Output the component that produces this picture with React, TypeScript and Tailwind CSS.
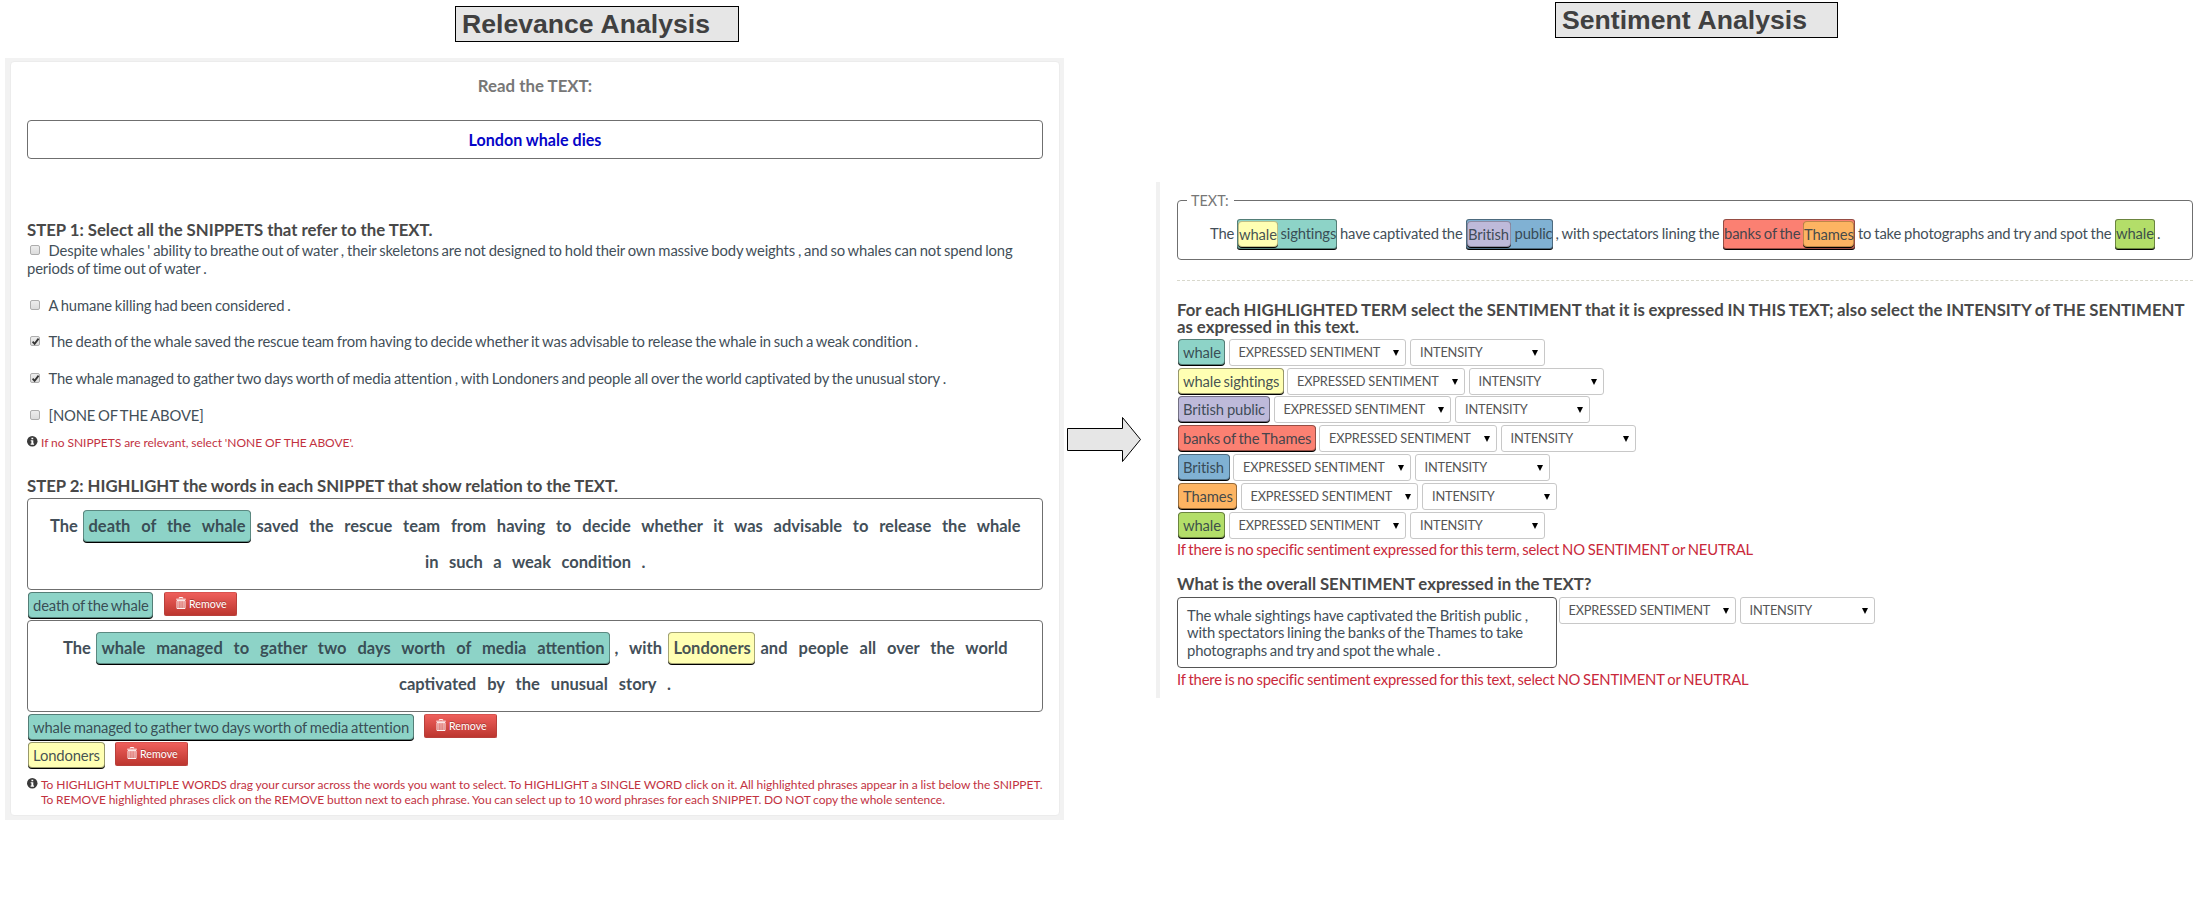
import type { ReactNode } from "react";

const body = "text-[14.8px] tracking-[-0.15px] [word-spacing:-0.9px] whitespace-nowrap [text-align-last:justify]";
const strong = "text-[16.5px] font-bold whitespace-nowrap [text-align-last:justify]";
const heading = "text-[16.75px] font-bold text-[#484848] [word-spacing:-0.6px] whitespace-nowrap [text-align-last:justify]";
const small = "text-[12px] tracking-[-0.02px] [word-spacing:-0.4px] text-[#c2323f] whitespace-nowrap [text-align-last:justify]";

const teal = "bg-[#8dd3c7]";
const yellow = "bg-[#ffffb3]";
const purple = "bg-[#bebada]";
const red = "bg-[#fb8072]";
const blue = "bg-[#80b1d3]";
const orange = "bg-[#fdb462]";
const green = "bg-[#b3de69]";

function Title({ className, width, children }: { className: string; width: string; children: ReactNode }) {
  return (
    <h1
      className={`h-[36px] border border-black bg-[#e6e6e6] pl-[6px] font-['Liberation_Sans',Arial,sans-serif] text-[26.6px] leading-[35px] font-bold text-[#404040] ${className}`}
    >
      <span className={`block whitespace-nowrap [text-align-last:justify] ${width}`}>{children}</span>
    </h1>
  );
}

function Check({ checked = false }: { checked?: boolean }) {
  return (
    <span className="mt-[4px] mr-[8.5px] ml-[3px] flex size-[10px] shrink-0 items-center justify-center rounded-[2px] border border-[#adadad] bg-linear-to-b from-[#ededed] to-[#dcdcdc]">
      {checked && (
        <svg viewBox="0 0 10 10" className="size-[9px] shrink-0">
          <path d="M1.8 5.2 L4 7.6 L8.4 1.8" fill="none" stroke="#333" strokeWidth="2" />
        </svg>
      )}
    </span>
  );
}

function Snippet({ checked, className, width, children }: { checked?: boolean; className: string; width: string; children: ReactNode }) {
  return (
    <label className={`flex h-[18px] leading-[18px] ${className}`}>
      <Check checked={checked} />
      <span className={`block ${body} ${width}`}>{children}</span>
    </label>
  );
}

function InfoIcon() {
  return (
    <svg viewBox="0 0 14 14" className="mt-[1px] mr-[3.5px] size-[10.5px] shrink-0">
      <circle cx="7" cy="7" r="7" fill="#3a3a3a" />
      <path d="M5.9 2.2h2.4v2H5.9zM4.9 5.5h3.5v4.4h1v1.6H4.8V9.9h1.1V7.1h-1z" fill="#fff" />
    </svg>
  );
}

function Remove({ className }: { className: string }) {
  return (
    <button
      className={`flex h-[24px] w-[73px] shrink-0 items-center rounded-[2px] border border-[#b8403b] border-t-[#d9534f] bg-linear-to-b from-[#ee5f5b] to-[#bd362f] pl-[11px] text-[10.7px] text-white text-shadow-[0_-1px_0_rgba(0,0,0,0.25)] ${className}`}
    >
      <svg viewBox="0 0 10 12" className="-mt-[3px] mr-[3px] h-[12px] w-[10px]">
        <path
          d="M3.3 1.4V0.5h3.4v0.9M0.2 2.2h9.6M1 3.6h8v7.9H1z"
          fill="none"
          stroke="#fff"
          strokeOpacity="0.95"
          strokeWidth="1"
        />
        <path d="M2.9 4v7M5 4v7M7.1 4v7" stroke="#fff" strokeOpacity="0.8" strokeWidth="1.1" />
      </svg>
      <span className="mt-px">Remove</span>
    </button>
  );
}

function Tag({ color, width, children }: { color: string; width: string; children: ReactNode }) {
  return (
    <span
      className={`block h-[26px] shrink-0 rounded-[4px] border border-black/40 px-[4px] leading-[25px] text-[#2f3d47]/90 shadow-[0_1px_0_#000] ${body} ${color} ${width}`}
    >
      {children}
    </span>
  );
}

function WordMark({ color, width, children }: { color: string; width: string; children: ReactNode }) {
  return (
    <span
      className={`block h-[32px] shrink-0 rounded-[4px] border border-black/35 px-[4.5px] leading-[30px] text-[#2f3d47]/90 shadow-[0_1px_0_#000] ${strong} ${color} ${width}`}
    >
      {children}
    </span>
  );
}

function Words({ className, children }: { className: string; children: ReactNode }) {
  return <span className={`block shrink-0 leading-[32px] ${strong} ${className}`}>{children}</span>;
}

function Select({ label, className }: { label: string; className: string }) {
  return (
    <span
      className={`flex h-[27px] shrink-0 items-center justify-between rounded-[3px] border border-[#c8c8c8] bg-white pr-[6px] pl-[9px] text-[12.8px] leading-[25px] tracking-[-0.17px] whitespace-nowrap text-[#555] ${className}`}
    >
      {label}
      <svg viewBox="0 0 6 6" className="size-[6px]">
        <path d="M0 0h6L3 6z" fill="#000" />
      </svg>
    </span>
  );
}

function Selects() {
  return (
    <>
      <Select label="EXPRESSED SENTIMENT" className="w-[177.5px]" />
      <Select label="INTENSITY" className="ml-[4px] w-[135px]" />
    </>
  );
}

const terms = [
  { text: "whale", color: teal, width: "w-[47px]", height: "h-[29px]" },
  { text: "whale sightings", color: yellow, width: "w-[105.5px]", height: "h-[28px]" },
  { text: "British public", color: purple, width: "w-[92px]", height: "h-[29px]" },
  { text: "banks of the Thames", color: red, width: "w-[137.5px]", height: "h-[29px]" },
  { text: "British", color: blue, width: "w-[51.5px]", height: "h-[29px]" },
  { text: "Thames", color: orange, width: "w-[59px]", height: "h-[29px]" },
  { text: "whale", color: green, width: "w-[47px]", height: "h-[27px]" },
];

function Mark({ color, className, children }: { color: string; className: string; children: ReactNode }) {
  return (
    <span className={`flex h-[30px] shrink-0 items-center rounded-[3px] border border-black/40 text-[#2f3d47]/90 shadow-[0_1px_0_#000] ${color} ${className}`}>
      {children}
    </span>
  );
}

function Inner({ color, className, children }: { color: string; className: string; children: ReactNode }) {
  return (
    <span className={`-mt-px block h-[26px] shrink-0 rounded-[4px] border border-black/25 leading-[25px] shadow-[0_1px_0_#000] ${body} ${color} ${className}`}>
      {children}
    </span>
  );
}

function Run({ className, children }: { className: string; children: ReactNode }) {
  return <span className={`block shrink-0 ${body} ${className}`}>{children}</span>;
}

function Relevance() {
  return (
    <section className="w-[1064px] shrink-0 pt-[6px] pl-[5px]">
      <Title className="ml-[450px] w-[284px]" width="w-[248px]">
        Relevance Analysis
      </Title>
      <div className="mt-[16px] h-[762px] bg-[#f2f2f2] pt-[3px] pr-[4px] pl-[5px]">
        <div className="h-[755px] rounded-[4px] border border-[#ececec] bg-white pl-[16px]">
          <div className="w-[1016px]">
            <h2 className="-mt-px h-[50px] text-center text-[16.83px] leading-[50px] font-bold text-[#777]">Read the TEXT:</h2>
            <div className="mt-[9px] h-[39px] rounded-[4px] border border-[#6f6f6f] text-center text-[16.1px] leading-[38px] font-bold text-[#0505c8]">
              London whale dies
            </div>
            <h3 className={`mt-[61px] h-[19px] w-[405.5px] leading-[19px] ${heading}`}>
              STEP 1: Select all the SNIPPETS that refer to the TEXT.
            </h3>
            <Snippet className="mt-[2px]" width="w-[964px]">
              Despite whales ' ability to breathe out of water , their skeletons are not designed to hold their own massive body weights , and so whales can not spend long
            </Snippet>
            <p className={`h-[18px] w-[179.5px] leading-[18px] ${body}`}>periods of time out of water .</p>
            <Snippet className="mt-[19px]" width="w-[242px]">
              A humane killing had been considered .
            </Snippet>
            <Snippet checked className="mt-[18px]" width="w-[869.5px]">
              The death of the whale saved the rescue team from having to decide whether it was advisable to release the whale in such a weak condition .
            </Snippet>
            <Snippet checked className="mt-[19px]" width="w-[897.5px]">
              The whale managed to gather two days worth of media attention , with Londoners and people all over the world captivated by the unusual story .
            </Snippet>
            <Snippet className="mt-[19px]" width="w-[154px]">
              [NONE OF THE ABOVE]
            </Snippet>
            <div className="mt-[11px] flex h-[16px] leading-[16px]">
              <InfoIcon />
              <p className={`w-[312.5px] ${small}`}>If no SNIPPETS are relevant, select 'NONE OF THE ABOVE'.</p>
            </div>
            <h3 className={`mt-[25px] mb-[2px] h-[20px] w-[591px] leading-[20px] ${heading}`}>
              STEP 2: HIGHLIGHT the words in each SNIPPET that show relation to the TEXT.
            </h3>
            <div className="h-[92px] rounded-[4px] border border-[#6f6f6f]">
              <div className="mt-[11px] ml-[22px] flex h-[36px]">
                <Words className="w-[27px]">The</Words>
                <span className="ml-[6px] flex">
                  <WordMark color={teal} width="w-[168px]">
                    death of the whale
                  </WordMark>
                </span>
                <Words className="ml-[5.5px] w-[764px]">
                  saved the rescue team from having to decide whether it was advisable to release the whale
                </Words>
              </div>
              <Words className="ml-[397px] w-[220.5px]">in such a weak condition .</Words>
            </div>
            <div className="flex h-[30px] pt-[2px] pl-px">
              <Tag color={teal} width="w-[125px]">
                death of the whale
              </Tag>
              <Remove className="ml-[11px]" />
            </div>
            <div className="h-[92px] rounded-[4px] border border-[#6f6f6f]">
              <div className="mt-[11px] ml-[35px] flex h-[36px]">
                <Words className="w-[27px]">The</Words>
                <span className="ml-[6px] flex">
                  <WordMark color={teal} width="w-[514px]">
                    whale managed to gather two days worth of media attention
                  </WordMark>
                </span>
                <Words className="ml-[4.5px] w-[47.5px]">, with</Words>
                <span className="ml-[6px] flex">
                  <WordMark color={yellow} width="w-[87px]">
                    Londoners
                  </WordMark>
                </span>
                <Words className="ml-[5.5px] w-[247px]">and people all over the world</Words>
              </div>
              <Words className="ml-[371px] w-[272px]">captivated by the unusual story .</Words>
            </div>
            <div className="flex h-[30px] pt-[2px] pl-px">
              <Tag color={teal} width="w-[386px]">
                whale managed to gather two days worth of media attention
              </Tag>
              <Remove className="ml-[10px]" />
            </div>
            <div className="flex h-[28px] pl-px">
              <Tag color={yellow} width="w-[77px]">
                Londoners
              </Tag>
              <Remove className="ml-[10px]" />
            </div>
            <div className="mt-[7px] flex leading-[15.2px]">
              <InfoIcon />
              <div>
                <p className={`w-[1001.5px] ${small}`}>
                  To HIGHLIGHT MULTIPLE WORDS drag your cursor across the words you want to select. To HIGHLIGHT a SINGLE WORD click on it. All highlighted phrases appear in a list below the SNIPPET.
                </p>
                <p className={`w-[904px] ${small}`}>
                  To REMOVE highlighted phrases click on the REMOVE button next to each phrase. You can select up to 10 word phrases for each SNIPPET. DO NOT copy the whole sentence.
                </p>
              </div>
            </div>
          </div>
        </div>
      </div>
    </section>
  );
}

function Sentiment() {
  return (
    <section className="w-[1052px] shrink-0 pt-[2px]">
      <Title className="ml-[399px] w-[283px]" width="w-[245px]">
        Sentiment Analysis
      </Title>
      <div className="mt-[144px] h-[516px] border-l-4 border-[#f1f1f1] pt-[18px] pl-[17px]">
        <div className="w-[1016px]">
          <div className="h-[60px] rounded-[4px] border border-[#6f6f6f]">
            <div className="-mt-[10px] ml-[9px] h-[20px] w-[47px] bg-white pl-[4px] text-[14.4px] leading-[20px] text-[#777]">TEXT:</div>
            <div className="mt-[8px] ml-[32px] flex h-[32px] leading-[29px]">
              <Run className="w-[23.5px]">The</Run>
              <Mark color={teal} className="ml-[3.5px] w-[100px]">
                <Inner color={yellow} className="w-[40px]">whale</Inner>
                <Run className="-mt-px ml-[2.5px] w-[56px]">sightings</Run>
              </Mark>
              <Run className="ml-[3px] w-[122.5px]">have captivated the</Run>
              <Mark color={blue} className="ml-[3.5px] w-[87px]">
                <Inner color={purple} className="w-[43.5px]">British</Inner>
                <Run className="-mt-px ml-[4px] w-[37px]">public</Run>
              </Mark>
              <Run className="ml-[2.5px] w-[164px]">, with spectators lining the</Run>
              <Mark color={red} className="ml-[3.5px] w-[132px]">
                <Run className="-mt-px w-[75.5px]">banks of the</Run>
                <Inner color={orange} className="ml-[3.5px] w-[51px]">Thames</Inner>
              </Mark>
              <Run className="ml-[3px] w-[253.5px]">to take photographs and try and spot the</Run>
              <Mark color={green} className="ml-[3.5px] w-[40px]">
                <Run className="-mt-px w-[38px]">whale</Run>
              </Mark>
              <Run className="ml-[2px]">.</Run>
            </div>
          </div>
          <div className="mt-[20px] border-t border-dashed border-[#d8d8cc]" />
          <h3 className={`mt-[20px] leading-[17px] ${heading}`}>
            <span className="block w-[1007.5px]">
              For each HIGHLIGHTED TERM select the SENTIMENT that it is expressed IN THIS TEXT; also select the INTENSITY of THE SENTIMENT
            </span>
            <span className="block w-[182px]">as expressed in this text.</span>
          </h3>
          <div className="mt-[4px] pl-px">
            {terms.map((t, i) => (
              <div key={i} className={`flex ${t.height}`}>
                <Tag color={t.color} width={t.width}>
                  {t.text}
                </Tag>
                <span className="w-[3.5px]" />
                <Selects />
              </div>
            ))}
          </div>
          <p className={`h-[20px] w-[576px] leading-[20px] text-[#c9283a] ${body}`}>
            If there is no specific sentiment expressed for this term, select NO SENTIMENT or NEUTRAL
          </p>
          <h3 className={`mt-[15px] h-[20px] w-[414.5px] leading-[20px] ${heading}`}>
            What is the overall SENTIMENT expressed in the TEXT?
          </h3>
          <div className="mt-[3px] flex">
            <div className="h-[71px] w-[380px] shrink-0 rounded-[4px] border border-[#555] pt-[9px] pl-[9px] leading-[17.3px]">
              <p className={`w-[341px] ${body}`}>The whale sightings have captivated the British public ,</p>
              <p className={`w-[336px] ${body}`}>with spectators lining the banks of the Thames to take</p>
              <p className={`w-[253.5px] ${body}`}>photographs and try and spot the whale .</p>
            </div>
            <Select label="EXPRESSED SENTIMENT" className="ml-[1.5px] w-[177px]" />
            <Select label="INTENSITY" className="ml-[4px] w-[135px]" />
          </div>
          <p className={`mt-px h-[20px] w-[571.5px] leading-[20px] text-[#c9283a] ${body}`}>
            If there is no specific sentiment expressed for this text, select NO SENTIMENT or NEUTRAL
          </p>
        </div>
      </div>
    </section>
  );
}

export default function App() {
  return (
    <main className="flex h-[912px] w-[2208px] overflow-hidden bg-white font-[Lato,sans-serif] text-[#434f59]">
      <Relevance />
      <div className="w-[92px] shrink-0 pt-[416px]">
        <svg viewBox="0 0 80 48" className="ml-[2px] h-[48px] w-[80px]">
          <path d="M1.5 12.5H56.5V1.5L74.5 23.5L56.5 45.5V34.5H1.5Z" fill="#e6e6e6" stroke="#000" strokeWidth="1" />
        </svg>
      </div>
      <Sentiment />
    </main>
  );
}
